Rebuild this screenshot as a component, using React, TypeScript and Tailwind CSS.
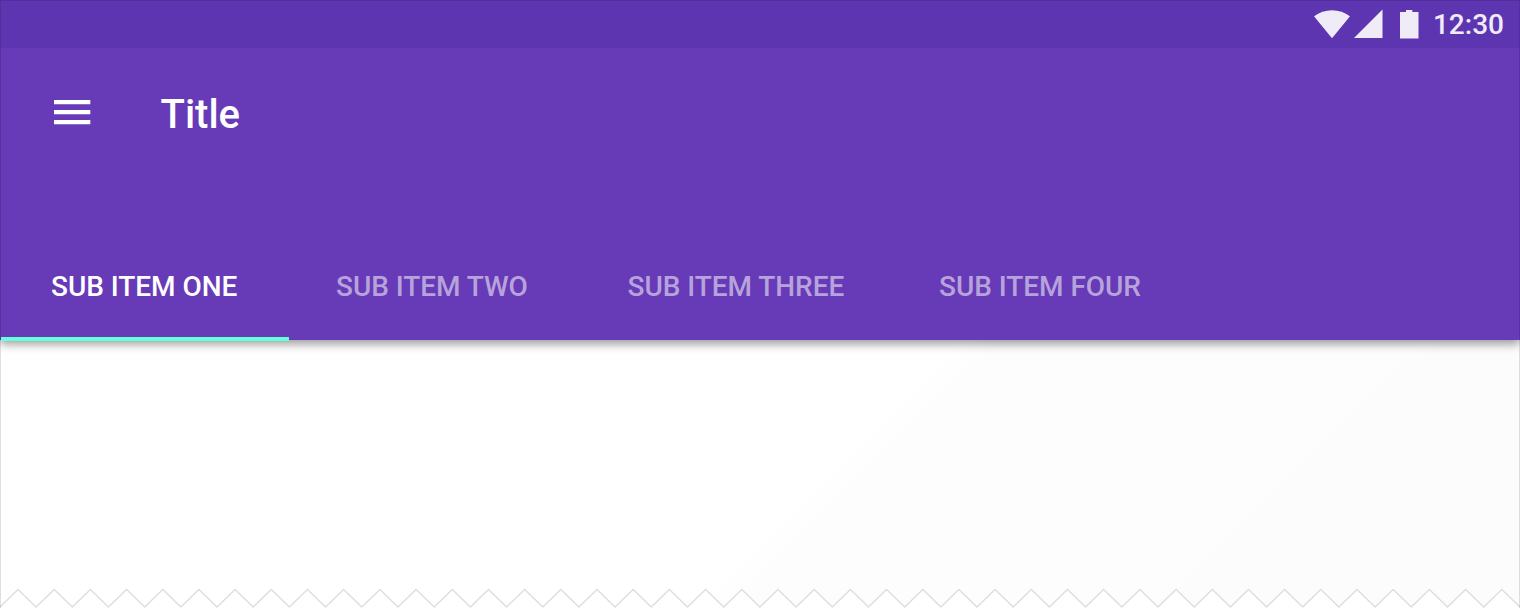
const tabs = [
  { label: "SUB ITEM ONE", cls: "w-[285px] text-white" },
  { label: "SUB ITEM TWO", cls: "w-[291.5px] text-[#b7a3dc]" },
  { label: "SUB ITEM THREE", cls: "w-[311.5px] text-[#b7a3dc]" },
  { label: "SUB ITEM FOUR", cls: "text-[#b7a3dc]" },
];

const teeth = Array.from(
  { length: 42 },
  (_, i) => `L${(18 + i * 36.19).toFixed(1)} 589.5L${(36.1 + i * 36.19).toFixed(1)} 607`,
).join(" ");
const edge = `M0 607 ${teeth}`;

export default function App() {
  return (
    <div className="relative flex h-[608px] w-[1520px] flex-col overflow-hidden bg-[linear-gradient(135deg,#fff_61%,#fdfdfd_63%,#fdfdfd_82%,#fcfcfc_84%)] font-[Roboto,sans-serif]">
      <header className="flex h-[340px] shrink-0 flex-col bg-[#673ab7] shadow-[0_4px_9px_rgba(0,0,0,0.4)]">
        <div className="flex h-12 items-center justify-end bg-[#5e35b1] pr-4">
          <svg className="h-12 w-[120px] fill-[#efebf7]" viewBox="1310 0 120 48">
            <path d="M1332 38.2L1314 16.2A30 30 0 0 1 1350 16.200Z" />
            <path d="M1354 38H1382.500V9.600Z" />
            <path d="M1400 12H1406V10H1412.300V12H1418.500V38.500H1400Z" />
          </svg>
          <span className="ml-[3px] pt-0.5 text-[28px] font-medium leading-[48px] text-[#efebf7]">12:30</span>
        </div>
        <div className="flex h-[128px] items-center pl-[54px]">
          <svg className="h-[25px] w-[37px] fill-white" viewBox="0 0 37 25">
            <path d="M0 0h36.300v4.300H0zM0 10h36.300v4.300H0zM0 20h36.300v4.300H0z" />
          </svg>
          <h1 className="ml-[69.5px] pt-1.5 text-[40px] font-medium text-white">Title</h1>
        </div>
        <nav className="mt-14 flex h-[108px] items-center pt-0.5 pl-[51px]">
          {tabs.map((t) => (
            <span key={t.label} className={`shrink-0 whitespace-nowrap text-[28px] font-medium tracking-[-0.04px] ${t.cls}`}>
              {t.label}
            </span>
          ))}
        </nav>
      </header>
      <div className="absolute top-[337px] left-px h-1 w-[288px] bg-[#64ffda]" />
      <svg className="absolute inset-0 h-full w-full" viewBox="0 0 1520 608" fill="none">
        <path d={`${edge} V608 H0Z`} fill="#fff" />
        <path d={edge} stroke="#dedede" strokeWidth="1.4" />
      </svg>
      <div className="pointer-events-none absolute inset-0 border-x border-t border-black/12" />
    </div>
  );
}
